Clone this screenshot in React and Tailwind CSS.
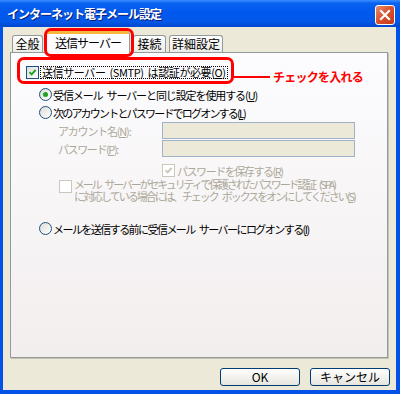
import React from 'react';

const jp = "font-['Noto_Sans_CJK_JP','Noto_Sans',sans-serif]";

function Check({ color }) {
  return (
    <svg width="9" height="9" viewBox="0 0 9 9">
      <polyline points="1.5,4.2 3.6,6.4 7.6,2" fill="none" stroke={color} strokeWidth="1.9" />
    </svg>
  );
}

function CheckBox({ checked, disabled }) {
  return (
    <span
      className={
        'w-[13px] h-[13px] shrink-0 flex items-center justify-center border ' +
        (disabled ? 'border-[#cac8bb] bg-white' : 'border-[#1c5180] bg-gradient-to-br from-[#dcdcd7] to-white')
      }
    >
      {checked && <Check color={disabled ? '#cac8bb' : '#21a121'} />}
    </span>
  );
}

function Radio({ checked }) {
  return (
    <span className="w-[13px] h-[13px] shrink-0 rounded-full border border-[#1c5180] bg-gradient-to-br from-[#dcdcd7] to-white flex items-center justify-center">
      {checked && <span className="w-[5px] h-[5px] rounded-full bg-[#21a121]" />}
    </span>
  );
}

// mnemonic letter in brackets, underlined
function Key({ k }) {
  return (
    <>
      (<span className="underline underline-offset-1">{k}</span>)
    </>
  );
}

// a visible word gap (negative tracking eats normal spaces)
function Gap() {
  return <span className="inline-block w-[4px]" />;
}

function Tab({ label, selected, className }) {
  if (selected) {
    return (
      <div
        className={
          'h-[22px] -mb-[1px] relative z-10 flex items-center justify-center bg-[#fcfcfe] border-x border-[#919b9c] rounded-t-[3px] border-t-[3px] border-t-[#f5b83a] ' +
          className
        }
      >
        <span className="text-[12px] leading-none pb-[1px] tracking-[-1px]">{label}</span>
      </div>
    );
  }
  return (
    <div
      className={
        'h-[17px] flex items-center justify-center bg-gradient-to-b from-white to-[#ecebe6] border border-b-0 border-[#919b9c] rounded-t-[3px] ' +
        className
      }
    >
      <span className="text-[12px] leading-none">{label}</span>
    </div>
  );
}

function XpButton({ children }) {
  return (
    <button className="w-[80px] h-[18px] rounded-[3px] border border-[#003c74] bg-gradient-to-b from-white to-[#e6e5de] text-[12px] leading-none flex items-center justify-center">
      {children}
    </button>
  );
}

export default function App() {
  return (
    <div className={'w-[400px] h-[394px] flex flex-col relative text-black ' + jp}>
      {/* title bar */}
      <div className="h-[27px] shrink-0 flex items-center justify-between pl-[7px] pr-[5px] bg-[linear-gradient(to_bottom,#3a8cff_0%,#0a62f0_12%,#0058ee_45%,#0458e8_80%,#0046cf_100%)]">
        <span className="text-white font-bold text-[12px] tracking-[-1px] [text-shadow:1px_1px_0_#0a1e7a]">
          インターネット電子メール設定
        </span>
        <div className="w-[20px] h-[20px] mt-[3px] rounded-[3px] border border-white bg-gradient-to-br from-[#e98a6c] via-[#d9502b] to-[#c2381a] flex items-center justify-center">
          <svg width="12" height="12" viewBox="0 0 12 12">
            <path d="M2 2 L10 10 M10 2 L2 10" stroke="white" strokeWidth="2.2" strokeLinecap="square" />
          </svg>
        </div>
      </div>

      {/* body */}
      <div className="flex-1 flex flex-col bg-[#ece9d8] border-l-[3px] border-r-[4px] border-b-[4px] border-[#0052e8]">
        {/* tabs */}
        <div className="flex items-end mt-[4px] ml-[9px] h-[21px]">
          <Tab label="全般" className="w-[31px]" />
          <Tab label="送信サーバー" selected className="w-[84px] ml-[3px]" />
          <Tab label="接続" className="w-[33px] ml-[3px]" />
          <Tab label="詳細設定" className="w-[54px] ml-[3px]" />
        </div>

        {/* tab panel */}
        <div className="ml-[7px] mr-[8px] h-[306px] border border-[#919b9c] shadow-[1px_1px_0_#c5c2b2] bg-gradient-to-b from-[#fcfcfe] to-[#f3eeee] flex flex-col text-[11px] leading-[12px] whitespace-nowrap">
          <div className="flex items-center mt-[13px] ml-[15px] h-[13px]">
            <CheckBox checked />
            <span className="ml-[1px] px-[1px] border border-dotted border-black leading-[11px] tracking-[-0.4px]">
              送信サーバー<Gap />(SMTP)<Gap />は認証が必要<Key k="O" />
            </span>
          </div>

          <div className="flex items-center mt-[9px] ml-[28px] h-[13px]">
            <Radio checked />
            <span className="ml-[1px] tracking-[-1.1px]">
              受信メール<Gap />サーバーと同じ設定を使用する<Key k="U" />
            </span>
          </div>

          <div className="flex items-center mt-[5px] ml-[28px] h-[13px]">
            <Radio />
            <span className="ml-[1px] tracking-[-1.8px]">
              次のアカウントとパスワードでログオンする<Key k="L" />
            </span>
          </div>

          <div className="flex items-center mt-[3px] ml-[47px] h-[17px]">
            <span className="w-[104px] text-[#aca899] tracking-[-1.2px]">
              アカウント名<Key k="N" />:
            </span>
            <span className="w-[193px] h-[17px] bg-[#ece9d8] border border-[#9fb2c8]" />
          </div>

          <div className="flex items-center mt-[1px] ml-[47px] h-[17px]">
            <span className="w-[104px] text-[#aca899] tracking-[-1.4px]">
              パスワード<Key k="P" />:
            </span>
            <span className="w-[193px] h-[17px] bg-[#ece9d8] border border-[#9fb2c8]" />
          </div>

          <div className="flex items-center mt-[7px] ml-[151px] h-[13px]">
            <CheckBox checked disabled />
            <span className="ml-[2px] text-[#aca899] tracking-[-1.45px]">
              パスワードを保存する<Key k="R" />
            </span>
          </div>

          <div className="flex items-start mt-[1px] ml-[48px]">
            <span className="mt-[2px]">
              <CheckBox disabled />
            </span>
            <div className="ml-[2px] text-[#aca899] leading-[12px] flex flex-col">
              <span className="tracking-[-2.2px]">
                メール<Gap />サーバーがセキュリティで保護されたパスワード認証<Gap />(SPA)
              </span>
              <span className="tracking-[-2px]">
                に対応している場合には、チェック<Gap />ボックスをオンにしてください<Key k="S" />
              </span>
            </div>
          </div>

          <div className="flex items-center mt-[20px] ml-[28px] h-[13px]">
            <Radio />
            <span className="ml-[1px] tracking-[-1.55px]">
              メールを送信する前に受信メール<Gap />サーバーにログオンする<Key k="I" />
            </span>
          </div>
        </div>

        {/* buttons */}
        <div className="flex justify-end gap-[10px] mt-[10px] mr-[6px]">
          <XpButton>OK</XpButton>
          <XpButton>キャンセル</XpButton>
        </div>
      </div>

      {/* red annotations */}
      <div className="absolute left-[44px] top-[28px] w-[90px] h-[29px] border-[3px] border-[#ff0000] rounded-[7px] z-20" />
      <div className="absolute left-[17px] top-[57px] w-[217px] h-[27px] border-[3px] border-[#ff0000] rounded-[7px] z-20" />
      <div className="absolute left-[233px] top-[76px] w-[37px] h-[2px] bg-[#ff0000] z-20" />
      <span className="absolute left-[273px] top-[69px] text-[12px] leading-[16px] font-bold text-[#ff0000] tracking-[-0.75px] z-20">
        チェックを入れる
      </span>
    </div>
  );
}
